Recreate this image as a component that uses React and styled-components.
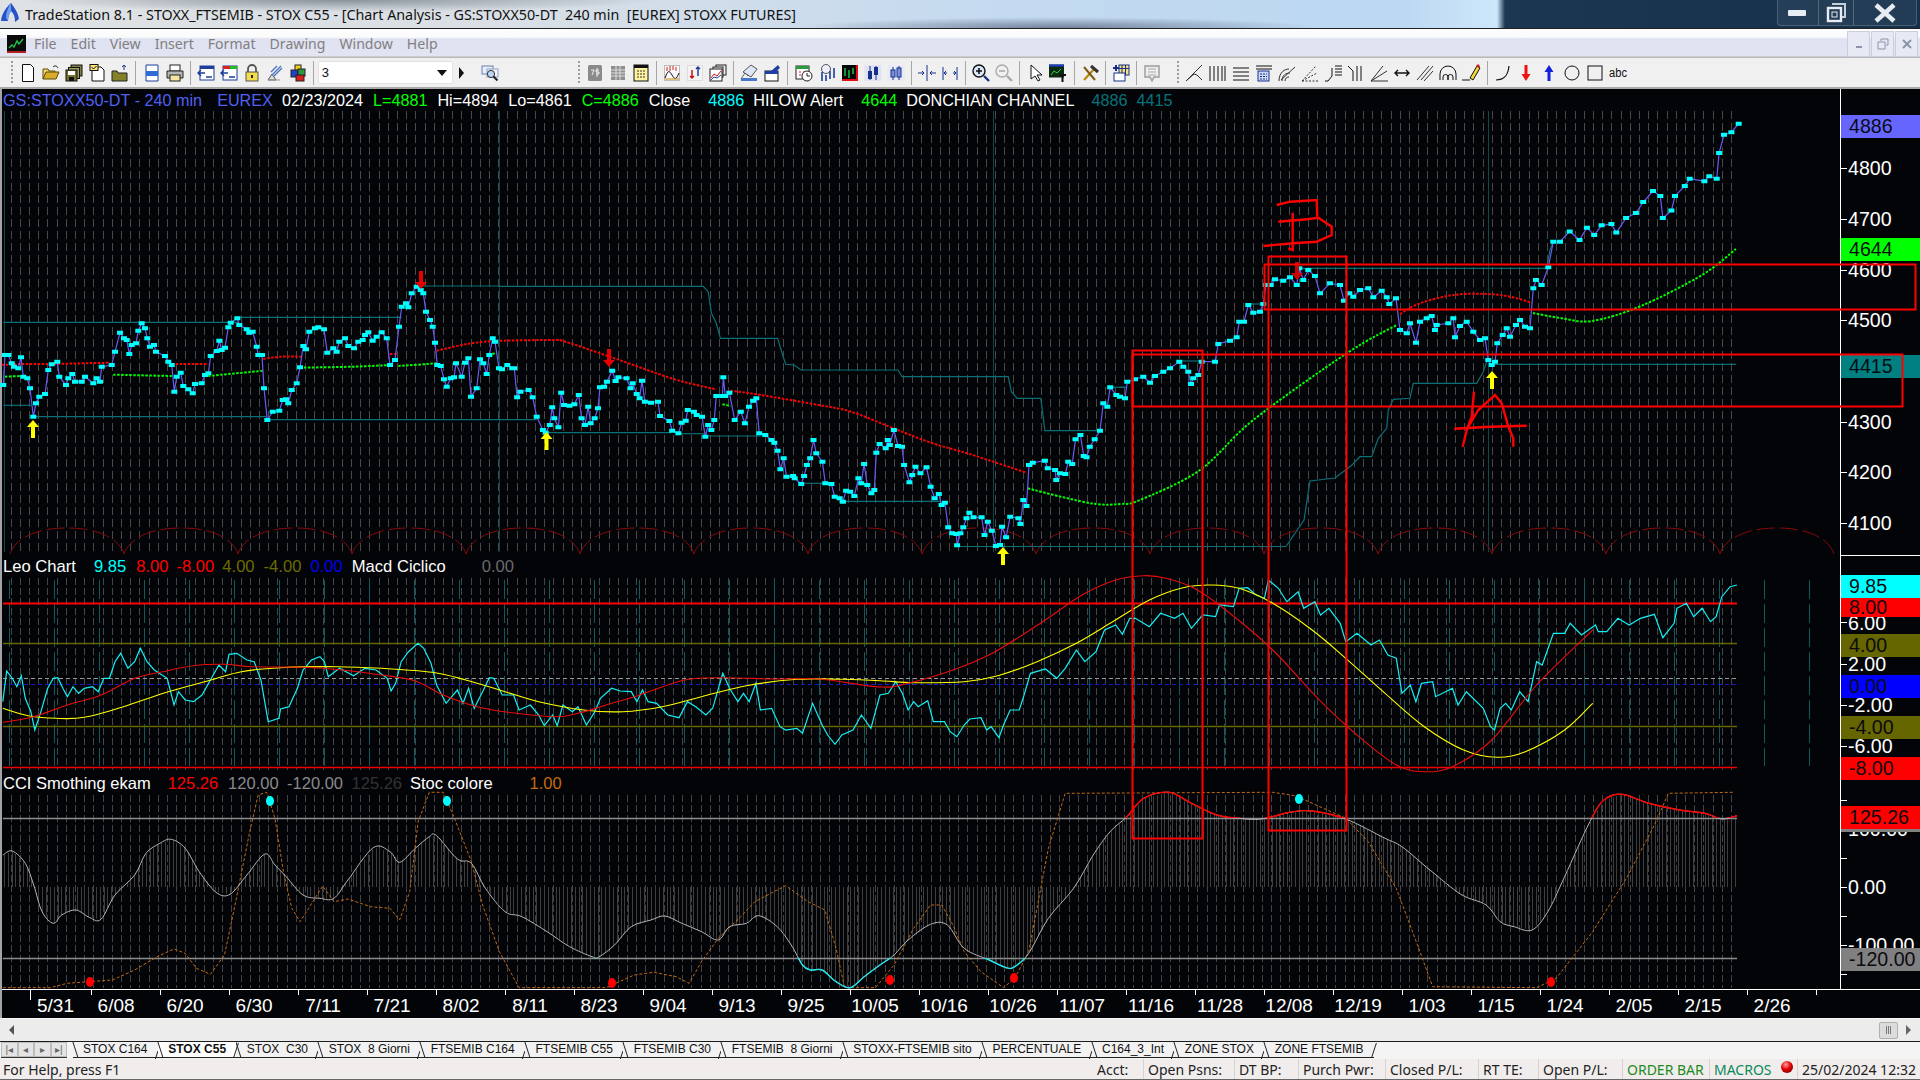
import React from 'react';
import styled, { createGlobalStyle } from 'styled-components';

const fromCrop = (pts, x0, y0, sx = 3, sy = 3) => pts.map(([x, y]) => [x0 + x / sx, y0 + y / sy]);
const toPoints = (pts) => pts.map(([x, y]) => `${x.toFixed(1)},${y.toFixed(1)}`).join(' ');
const Z10 = 2.45, Z11 = 1.782, SHOWN = 0.8167;

// catmull-rom through the points, for the averages
const smoothPath = (pts) => {
  let d = `M${pts[0][0].toFixed(1)} ${pts[0][1].toFixed(1)}`;
  for (let i = 0; i < pts.length - 1; i++) {
    const p0 = pts[i - 1] || pts[i];
    const p1 = pts[i];
    const p2 = pts[i + 1];
    const p3 = pts[i + 2] || p2;
    const c1x = p1[0] + (p2[0] - p0[0]) / 6;
    const c1y = p1[1] + (p2[1] - p0[1]) / 6;
    const c2x = p2[0] - (p3[0] - p1[0]) / 6;
    const c2y = p2[1] - (p3[1] - p1[1]) / 6;
    d += `C${c1x.toFixed(1)} ${c1y.toFixed(1)} ${c2x.toFixed(1)} ${c2y.toFixed(1)} ${p2[0].toFixed(1)} ${p2[1].toFixed(1)}`;
  }
  return d;
};

const priceLine = [
  ...fromCrop([[10,345],[15,255],[25,255],[35,280],[42,290],[55,295],[63,262],[70,320],[82,325],[90,355],[100,440],[108,400],[118,380],[135,372],[145,300],[155,283],[172,275],[178,320],[198,345],[205,325],[217,312],[225,335],[245,335],[255,320],[280,340],[290,325],[300,335],[305,290],[335,285],[345,245],[360,188],[372,205],[380,210],[388,252],[395,225],[408,220],[415,182],[425,160],[435,175],[442,205],[450,230],[462,225],[468,245],[495,258],[505,275],[515,285],[523,365],[530,320],[542,308],[550,348],[565,358],[578,370],[585,342],[605,340],[615,315],[625,310],[632,258],[650,243],[658,212],[665,240],[675,233],[685,172],[692,158],[712,145],[718,165],[740,178],[748,188],[758,185],[770,230],[775,255],[786,255],[792,355],[802,450],[818,425],[838,422],[848,390],[858,388],[865,400],[875,360],[890,340],[900,292],[910,228],[918,238],[928,185],[945,175],[955,172],[972,178],[982,248],[1000,235],[1010,245],[1018,215],[1035,205],[1045,228],[1062,235],[1075,215],[1088,210],[1095,195],[1105,187],[1118,212],[1130,200],[1145,187],[1160,205],[1170,285],[1185,270],[1197,170],[1205,110],[1218,100],[1225,112],[1235,70],[1250,50],[1262,60],[1270,70],[1278,125],[1290,150],[1298,170],[1305,218],[1312,285],[1322,288],[1332,328],[1340,350],[1352,325],[1362,322],[1368,280],[1385,320],[1395,278],[1405,265],[1413,380],[1430,355],[1440,268],[1450,280],[1460,312],[1468,255],[1478,205],[1485,215],[1497,295]], 0, 270),
  ...fromCrop([[5,298],[18,285],[30,295],[35,295],[42,382],[50,365],[70,360],[80,382],[90,440],[105,480],[112,488],[122,465],[128,412],[133,445],[143,472],[150,368],[157,405],[170,407],[182,403],[193,375],[200,445],[208,465],[216,410],[222,460],[232,445],[240,415],[245,352],[255,350],[262,335],[275,302],[283,333],[290,322],[310,325],[320,355],[325,340],[335,372],[342,385],[348,332],[355,395],[370,398],[387,395],[392,438],[415,453],[422,482],[437,490],[445,458],[455,452],[460,420],[475,425],[482,435],[495,440],[503,500],[510,465],[518,480],[525,450],[530,378],[545,378],[547,322],[552,378],[562,368],[575,450],[590,425],[600,460],[610,410],[620,392],[628,385],[635,490],[650,495],[665,510],[672,518],[680,542],[687,598],[695,565],[702,620],[718,618],[722,625],[738,642],[745,618],[752,585],[760,565],[768,510],[775,550],[790,575],[797,640],[812,642],[820,680],[832,685],[840,695],[848,662],[858,665],[868,678],[878,625],[885,640],[892,582],[900,645],[910,670],[917,660],[922,548],[930,522],[945,535],[950,510],[955,525],[965,480],[975,528],[985,530],[990,585],[1003,637],[1010,615],[1018,590],[1030,610],[1045,592],[1055,650],[1065,685],[1075,672],[1082,705],[1090,698],[1098,772],[1108,790],[1118,792],[1120,826],[1128,790],[1135,772],[1143,745],[1150,728],[1160,742],[1180,742],[1187,795],[1195,755],[1205,782],[1215,828],[1225,825],[1230,770],[1240,802],[1250,740],[1270,745],[1275,762],[1282,690],[1290,708],[1296,585],[1305,578],[1335,572],[1342,595],[1360,600],[1363,630],[1372,610],[1385,612],[1392,575],[1402,582],[1410,508],[1422,495],[1430,558],[1437,562],[1445,530],[1457,508],[1470,482],[1478,400],[1488,410],[1495,352],[1510,375]], 500, 270, Z10),
  ...fromCrop([[0,620],[15,625],[22,575],[45,568],[70,560],[90,578],[105,558],[130,545],[150,535],[178,515],[190,530],[205,545],[213,582],[220,565],[235,555],[245,515],[285,515],[295,462],[330,452],[350,442],[358,395],[372,395],[385,345],[400,368],[420,365],[430,342],[438,285],[452,285],[465,268],[490,272],[510,262],[530,285],[538,235],[550,270],[565,240],[585,258],[600,310],[630,280],[660,285],[672,332],[688,310],[700,320],[720,300],[745,295],[760,322],[785,302],[800,322],[808,342],[828,325],[840,420],[860,430],[870,400],[888,458],[900,395],[920,385],[935,378],[945,420],[950,405],[985,400],[1000,385],[1005,442],[1020,408],[1040,395],[1060,425],[1080,450],[1095,445],[1105,510],[1115,525],[1125,515],[1132,460],[1148,435],[1160,415],[1170,440],[1188,405],[1200,390],[1215,410],[1230,415],[1240,295],[1248,270],[1265,285],[1285,232],[1300,155],[1320,155]], 1120, 190),
  ...fromCrop([[1282,189],[1290,196],[1296,186],[1302,192],[1308,184],[1316,183],[1320,190],[1328,178],[1336,174],[1342,165],[1350,156],[1356,160],[1358,178],[1365,172],[1368,160],[1376,152],[1380,146],[1392,148],[1396,144],[1402,146],[1404,125],[1408,110],[1414,108],[1420,101]], 0, 0, SHOWN, SHOWN),
];

const channelLines = [
  fromCrop([[10,157],[715,157]], 0, 270),
  fromCrop([[715,142],[1205,142]], 0, 270),
  fromCrop([[1262,48],[1500,48]], 0, 270),
  fromCrop([[0,49],[498,49],[510,65],[518,130],[530,160],[540,205],[680,205],[695,265],[700,283],[720,285],[738,300],[975,300],[985,320],[1245,320],[1253,365],[1267,385],[1325,385],[1335,482],[1470,482]], 500, 270, Z10),
  fromCrop([[1495,352],[1535,352]], 500, 270, Z10),
  fromCrop([[0,592],[18,592]], 1120, 190),
  fromCrop([[180,513],[245,513]], 1120, 190),
  fromCrop([[385,342],[430,342]], 1120, 190),
  fromCrop([[540,235],[1280,235],[1290,180],[1300,155]], 1120, 190),
  fromCrop([[10,406],[92,406]], 0, 270),
  fromCrop([[100,440],[800,440]], 0, 270),
  fromCrop([[805,449],[1500,449]], 0, 270),
  fromCrop([[0,449],[90,449]], 500, 270, Z10),
  fromCrop([[112,488],[420,488]], 500, 270, Z10),
  fromCrop([[437,491],[500,491]], 500, 270, Z10),
  fromCrop([[503,498],[640,498]], 500, 270, Z10),
  fromCrop([[740,640],[797,640]], 500, 270, Z10),
  fromCrop([[840,694],[1080,694]], 500, 270, Z10),
  [[957,546.5],[1286,546.5]],
  [[1286,546.5],[1304,520],[1310,481],[1335,478],[1352,465],...fromCrop([[700,820],[720,800],[755,800],[775,745],[800,715],[805,660],[820,628],[870,625],[880,580],[1070,580],[1090,545],[1100,515]], 1120, 190)],
  [[1490,364.3],[1736,364.3]],
];

const redAverage = [
  fromCrop([[5,285],[70,282],[150,282],[330,278]], 0, 270),
  fromCrop([[515,282],[625,282]], 0, 270),
  fromCrop([[790,267],[840,260],[905,260]], 0, 270),
  fromCrop([[1170,252],[1190,252]], 0, 270),
  fromCrop([[1310,242],[1400,222],[1475,213]], 0, 270),
  fromCrop([[0,212],[130,210],[160,215],[280,265],[420,325],[500,350],[530,358]], 500, 270, Z10),
  fromCrop([[565,362],[640,375],[780,405],[860,425],[970,478],[1060,520],[1150,552],[1290,608]], 500, 270, Z10),
  fromCrop([[840,372],[900,340],[1000,315],[1100,312],[1170,320],[1235,338]], 1120, 190),
];

const greenAverage = [
  fromCrop([[15,320],[65,318]], 0, 270),
  fromCrop([[170,318],[180,319]], 0, 270),
  fromCrop([[340,314],[515,318]], 0, 270),
  fromCrop([[625,318],[790,302]], 0, 270),
  fromCrop([[900,293],[1060,290],[1170,285]], 0, 270),
  fromCrop([[1195,288],[1310,280]], 0, 270),
  fromCrop([[1465,252],[1490,250]], 0, 270),
  fromCrop([[545,403],[565,408]], 500, 270, Z10),
  [...fromCrop([[1293,655],[1380,682],[1460,702],[1520,702],[1568,690]], 500, 270, Z10), ...fromCrop([[240,840],[400,690],[680,490],[830,405]], 1120, 190)],
  [[1533,313],[1560,318],[1592,321],[1641,306],[1702,275],[1736,249]],
];

const macdLine = [
  ...fromCrop([[5,440],[12,348],[22,370],[30,395],[38,362],[45,430],[55,470],[62,525],[72,475],[85,400],[95,370],[103,368],[112,400],[120,425],[130,395],[140,415],[150,400],[165,395],[175,410],[185,370],[195,370],[205,320],[215,295],[228,340],[240,320],[250,280],[262,320],[275,345],[298,370],[310,450],[318,410],[330,435],[345,440],[360,420],[375,375],[390,330],[402,350],[408,298],[422,295],[440,315],[453,320],[465,375],[478,500],[497,490],[500,462],[515,455],[530,400],[540,345],[555,315],[570,305],[578,320],[585,365],[605,340],[630,362],[650,340],[670,345],[690,370],[697,408],[705,385],[715,320],[728,290],[745,265],[755,280],[768,325],[778,390],[795,445],[815,405],[825,445],[835,400],[845,460],[860,410],[872,368],[880,370],[895,420],[915,420],[925,465],[945,450],[960,480],[970,512],[985,480],[993,512],[1003,450],[1020,470],[1030,455],[1045,510],[1060,470],[1070,430],[1090,400],[1105,408],[1125,410],[1135,440],[1145,405],[1155,440],[1170,445],[1190,480],[1210,488],[1225,440],[1240,455],[1258,480],[1270,460],[1288,355],[1300,400],[1315,440],[1325,415],[1335,440],[1347,385],[1355,465],[1375,460],[1390,515],[1400,525],[1420,520],[1430,535],[1448,445],[1465,510],[1475,540],[1488,568],[1500,540],[1520,525],[1535,480],[1552,520],[1568,420]], 0, 555, Z11),
  ...fromCrop([[15,415],[28,380],[40,415],[50,465],[60,440],[68,455],[85,437],[95,500],[115,500],[125,530],[137,545],[150,510],[160,492],[180,488],[190,525],[198,515],[212,548],[220,510],[232,465],[248,465],[255,430],[268,355],[295,342],[315,370],[330,340],[350,285],[365,320],[385,290],[400,225],[420,210],[432,238],[445,190],[455,190],[480,215],[500,175],[525,190],[540,175],[555,220],[575,180],[598,185],[605,150],[630,155],[640,100],[655,98],[670,120],[685,130],[692,75],[710,100],[725,140],[745,110],[755,160],[775,140],[785,180],[800,160],[820,205],[830,260],[850,235],[875,270],[890,255],[905,300],[920,310],[930,415],[945,390],[955,440],[965,385],[985,380],[990,425],[1020,400],[1030,450],[1045,410],[1075,460],[1088,515],[1095,525],[1105,460],[1115,445],[1125,465],[1140,410],[1155,440],[1170,320],[1180,330],[1200,235],[1220,235],[1230,205],[1250,240],[1275,210],[1280,230],[1295,230],[1315,190],[1335,210],[1355,190],[1380,178],[1395,248],[1415,205],[1420,160],[1437,145],[1450,185],[1465,160],[1480,200],[1490,185],[1500,125],[1515,95],[1527,90]], 880, 555, Z11),
];

const macdRed = [
  ...fromCrop([[5,502],[60,485],[120,450],[180,420],[240,370],[290,350],[345,332],[400,328],[450,335],[540,337],[610,345],[680,360],[740,378],[790,420],[850,455],[920,475],[990,485],[1030,475],[1080,450],[1140,420],[1220,375],[1290,368],[1380,372],[1460,372],[1568,396]], 0, 555, Z11),
  ...fromCrop([[50,385],[130,345],[200,295],[290,200],[360,120],[420,75],[470,62],[510,70],[560,100],[620,170],[700,285],[780,430],[850,540],[920,630],[970,650],[1020,635],[1090,555],[1170,390],[1270,225]], 880, 555, Z11),
];

const macdYellow = [
  ...fromCrop([[5,460],[50,482],[100,490],[150,487],[220,455],[300,410],[370,378],[430,350],[500,338],[600,335],[680,340],[770,352],[830,375],[900,410],[960,440],[1040,465],[1110,470],[1180,455],[1250,425],[1330,392],[1420,373],[1500,373],[1568,377]], 0, 555, Z11),
  ...fromCrop([[60,383],[150,380],[210,362],[280,320],[350,265],[410,205],[480,135],[540,98],[590,90],[640,100],[700,145],[770,225],[830,310],[900,415],[970,515],[1040,585],[1100,607],[1150,590],[1220,525],[1270,445]], 880, 555, Z11),
];

const cciLine = [
  ...fromCrop([[5,900],[22,888],[45,925],[60,990],[75,1070],[95,1105],[110,1080],[135,1065],[160,1088],[180,1093],[205,1020],[240,960],[260,895],[285,865],[305,853],[330,880],[355,950],[385,1012],[410,1018],[440,960],[472,897],[490,930],[510,965],[540,1020],[570,1030],[595,1030],[620,975],[665,878],[695,890],[712,922],[740,880],[765,845],[778,842],[815,912],[840,925],[865,1000],[900,1070],[930,1085],[975,1130],[1015,1175],[1055,1205],[1068,1205],[1095,1170],[1125,1115],[1160,1095],[1185,1083],[1215,1105],[1250,1130],[1280,1155],[1300,1115],[1330,1105],[1352,1082],[1385,1115],[1410,1170],[1430,1230],[1445,1245],[1465,1245],[1490,1280],[1515,1298],[1540,1265],[1568,1230]], 0, 555, Z11),
  ...fromCrop([[25,1200],[50,1155],[90,1108],[120,1110],[150,1180],[195,1215],[225,1238],[240,1235],[265,1195],[300,1090],[345,1000],[380,900],[410,830],[440,785],[470,730],[515,712],[555,745],[600,780],[640,790],[680,792],[730,772],[770,768],[830,792],[900,850],[930,875],[980,945],[1035,1018],[1080,1050],[1105,1100],[1130,1115],[1162,1125],[1190,1070],[1220,965],[1265,800],[1290,735],[1322,718],[1370,745],[1425,765],[1470,775],[1500,792],[1527,782]], 880, 555, Z11),
];

const stocLine = [
  ...fromCrop([[5,1298],[90,1298],[120,1285],[200,1275],[240,1245],[280,1205],[310,1182],[330,1195],[350,1240],[375,1258],[400,1200],[420,1040],[445,830],[460,720],[475,712],[490,790],[505,950],[520,1060],[535,1100],[550,1060],[575,993],[595,1040],[620,1032],[660,1055],[695,1060],[712,1095],[730,1010],[745,800],[765,712],[790,712],[810,790],[840,920],[860,1050],[890,1190],[925,1298],[1080,1298],[1130,1260],[1165,1252],[1205,1265],[1228,1285],[1250,1220],[1280,1150],[1320,1085],[1345,1040],[1400,992],[1440,1040],[1470,1065],[1490,1180],[1505,1298],[1560,1298]], 0, 555, Z11),
  ...fromCrop([[25,1230],[60,1120],[90,1050],[110,1050],[130,1110],[150,1190],[180,1250],[220,1298],[240,1270],[265,1190],[300,880],[330,715],[700,712],[740,722],[830,790],[870,860],[920,1000],[960,1180],[985,1295],[1170,1298],[1205,1270],[1270,1130],[1330,970],[1380,810],[1405,715],[1520,712]], 880, 555, Z11),
];

const cciAt = (x) => {
  for (let i = 1; i < cciLine.length; i++) {
    const [x1, y1] = cciLine[i];
    if (x1 >= x) {
      const [x0, y0] = cciLine[i - 1];
      return y0 + ((y1 - y0) * (x - x0)) / (x1 - x0 || 1);
    }
  }
  return 887;
};

const range = (from, to, step) => {
  const out = [];
  for (let v = from; step > 0 ? v <= to : v >= to; v += step) out.push(v);
  return out;
};

const grayGrid = (top, bottom) => range(1731, 3, -9.2).map((x) => `M${Math.round(x) + 0.5} ${top}V${bottom}`).join('');
const bars = range(4, 1737, 3.83).map((x) => `M${Math.round(x) + 0.5} 887V${cciAt(x).toFixed(1)}`).join('');

const arcs = range(-1, 14, 1).map((k) => {
  const c = 124 + 114 * k;
  return `M${c} 554C${c + 4} 541 ${c + 22} 528 ${c + 57} 528S${c + 110} 541 ${c + 114} 554`;
}).join('');

const dates = ['6/08','6/20','6/30','7/11','7/21','8/02','8/11','8/23','9/04','9/13','9/25','10/05','10/16','10/26','11/07','11/16','11/28','12/08','12/19','1/03','1/15','1/24','2/05','2/15','2/26',''];

const GlobalStyle = createGlobalStyle`
  html, body { margin: 0; padding: 0; background: #000; }
  * { box-sizing: border-box; }
`;

const Window = styled.div`
  width: 1920px;
  height: 1080px;
  display: flex;
  flex-direction: column;
  overflow: hidden;
  font-family: "Noto Sans", "Liberation Sans", sans-serif;
`;

const TitleBar = styled.div`
  height: 29px;
  display: flex;
  align-items: flex-start;
  border-bottom: 1px solid #222;
  background:
    radial-gradient(ellipse 320px 12px at 340px 0, rgba(110,120,130,.75), transparent),
    radial-gradient(ellipse 260px 11px at 1060px 28px, rgba(60,70,100,.6), transparent),
    linear-gradient(90deg, #dfe2e4 0, #d9dfe5 500px, #c4daf0 1000px, #bcd8f2 1400px, #cde6fa 1497px, #1b3752 1505px, #16304b 1920px);
`;

const TitleText = styled.div`
  margin-left: 5px;
  font-size: 14.3px;
  line-height: 29px;
  color: #111;
  white-space: pre;
`;

const WindowButtons = styled.div`
  margin-left: auto;
  margin-right: 3px;
  height: 26px;
  display: flex;
  border: 1px solid rgba(255,255,255,.22);
  border-top: 0;
  border-radius: 0 0 4px 4px;
`;

const WindowButton = styled.div`
  width: ${(p) => p.$w}px;
  display: flex;
  align-items: center;
  justify-content: center;
  border-left: ${(p) => (p.$first ? '0' : '1px solid rgba(255,255,255,.22)')};
  background: rgba(255,255,255,.06);
`;

const MenuBar = styled.div`
  height: 29px;
  display: flex;
  align-items: center;
  padding-left: 7px;
  background: linear-gradient(#fdfdfd 0, #fbfbfb 28%, #dfe2f1 34%, #e2e4f2 92%, #b9b9b9 97%);
`;

const MenuItems = styled.div`
  display: flex;
  gap: 14px;
  margin-left: 8px;
`;

const MenuItem = styled.span`
  font-size: 14.1px;
  color: #808080;
`;

const MdiButtons = styled.div`
  margin-left: auto;
  margin-right: 2px;
  display: flex;
  gap: 1px;
`;

const MdiButton = styled.div`
  width: 23px;
  height: 26px;
  display: flex;
  align-items: center;
  justify-content: center;
  border: 1px solid #c9cfdd;
  background: #e7eaf5;
`;

const Toolbar = styled.div`
  height: 31px;
  display: flex;
  align-items: center;
  padding-left: 10px;
  background: #f0f0f0;
  border-bottom: 2px solid #a9a9a9;
`;

const Grip = styled.div`
  width: 6.5px;
  height: 24px;
  margin-left: ${(p) => p.$left || 0}px;
  background: repeating-linear-gradient(#9c9c9c 0 2px, transparent 2px 4px) left 1px top 0 / 2px 100% no-repeat;
`;

const ToolSlot = styled.div`
  width: 23.1px;
  height: 22px;
  flex: none;
  display: flex;
  align-items: center;
  justify-content: center;
  margin-left: ${(p) => p.$left || 0}px;
`;

const ToolSep = styled.div`
  width: 1px;
  height: 24px;
  margin: 0 3.5px;
  flex: none;
  background: #a6a6a6;
`;

const Combo = styled.div`
  width: 135px;
  height: 23px;
  flex: none;
  display: flex;
  align-items: center;
  justify-content: space-between;
  padding: 0 5px 0 3px;
  background: #fff;
  border: 1px solid #e2e2e2;
  border-radius: 2px;
  font: 13px "Liberation Sans", sans-serif;
  color: #111;
`;

const ComboDrop = styled.span`
  border-top: 6px solid #111;
  border-left: 5px solid transparent;
  border-right: 5px solid transparent;
`;

const ComboNext = styled.span`
  margin: 0 5px 0 6px;
  width: 5px;
  flex: none;
  border-left: 5px solid #111;
  border-top: 6px solid transparent;
  border-bottom: 6px solid transparent;
`;

const ChartFrame = styled.div`
  height: 929px;
  position: relative;
  display: flex;
  flex-direction: column;
  background: #030408;
  border-left: 2px solid #a4a4a4;
  font-family: "Liberation Sans", Arial, sans-serif;
`;

const PaneRow = styled.div`
  height: ${(p) => p.$h}px;
  display: grid;
  grid-template-columns: 1838px 80px;
`;

const PlotColumn = styled.div`
  display: flex;
  flex-direction: column;
  min-width: 0;
`;

const Legend = styled.div`
  height: ${(p) => p.$h}px;
  padding-top: ${(p) => p.$pad || 0}px;
  padding-left: 1px;
  display: flex;
  align-items: center;
  font-size: ${(p) => p.$size || 16.2}px;
  white-space: pre;
  color: #fff;
`;

const LegendItem = styled.span`
  color: ${(p) => p.$c || '#fff'};
  margin-left: ${(p) => p.$gap ?? 10}px;
`;

const Plot = styled.svg`
  display: block;
  width: 1838px;
  height: ${(p) => p.$h}px;
  overflow: visible;
`;

const AxisColumn = styled.div`
  position: relative;
  border-left: 1px solid #fff;
  border-bottom: ${(p) => (p.$sep ? '1px solid #fff' : '0')};
  font-size: 19.6px;
  color: #fff;
`;

const AxisLabel = styled.div`
  position: absolute;
  left: 7px;
  height: 23px;
  line-height: 23px;
  white-space: pre;
`;

const AxisTag = styled.div`
  position: absolute;
  left: 0;
  right: 0;
  height: ${(p) => p.$h || 23}px;
  padding-left: 8px;
  line-height: ${(p) => p.$h || 23}px;
  background: ${(p) => p.$bg};
  color: #0b0b12;
`;

const AxisTick = styled.div`
  position: absolute;
  left: 0;
  width: 6px;
  height: 1px;
  background: #fff;
`;

const TimeAxis = styled.div`
  height: 29px;
  display: flex;
  padding-left: 28px;
  border-top: 1px solid #fff;
  font-size: 19px;
  color: #fff;
`;

const TimeCell = styled.div`
  width: ${(p) => p.$w}px;
  flex: none;
  position: relative;
  height: 100%;
  &::before {
    content: '';
    position: absolute;
    left: 0;
    top: 0;
    width: 1px;
    height: ${(p) => (p.$long ? 10 : 5)}px;
    background: #fff;
  }
`;

const TimeText = styled.span`
  display: block;
  width: 51px;
  line-height: 32px;
  text-align: center;
`;

const Drawings = styled.svg`
  position: absolute;
  left: 0;
  top: 0;
  width: 1918px;
  height: 929px;
  pointer-events: none;
`;

const ScrollRow = styled.div`
  height: 23px;
  display: flex;
  align-items: center;
  padding: 0 9px;
  background: #ececec;
  border-top: 1px solid #f6f6f6;
`;

const ArrowLeft = styled.span`
  border-right: 5px solid #555;
  border-top: 5px solid transparent;
  border-bottom: 5px solid transparent;
`;

const ArrowRight = styled.span`
  margin-left: 8px;
  border-left: 5px solid #666;
  border-top: 5px solid transparent;
  border-bottom: 5px solid transparent;
`;

const ScrollThumb = styled.div`
  margin-left: auto;
  width: 19px;
  height: 17px;
  display: flex;
  align-items: center;
  justify-content: center;
  gap: 1px;
  background: #dcdcdc;
  border: 1px solid #b0b0b0;
  border-radius: 2px;
`;

const ThumbLine = styled.span`
  width: 1px;
  height: 8px;
  background: #777;
`;

const TabRow = styled.div`
  height: 18px;
  display: flex;
  padding-left: 1px;
  background: #f4f4f4;
  border-top: 1px solid #1c1c1c;
`;

const TabNav = styled.div`
  width: 66px;
  height: 16px;
  flex: none;
  display: flex;
  margin-right: 5.6px;
  background: #e4e4e4;
  border-bottom: 1px solid #333;
`;

const TabNavButton = styled.span`
  flex: 1;
  display: flex;
  align-items: center;
  justify-content: center;
  border: 1px solid #bcbcbc;
  color: #666;
  font: 10px "Liberation Sans", sans-serif;
`;

const Tab = styled.div`
  position: relative;
  height: 16px;
  padding: 0 10.4px;
  white-space: pre;
  font: ${(p) => (p.$active ? 'bold' : 'normal')} 12px/15px "Liberation Sans", sans-serif;
  color: #111;
  background: ${(p) => (p.$active ? '#fff' : '#f2f2f2')};
  border-bottom: 1px solid #222;
  z-index: ${(p) => (p.$active ? 1 : 0)};
  &::before, &::after {
    content: '';
    position: absolute;
    width: 1px;
    background: #222;
    bottom: -1px;
  }
  &::before { left: 2px; top: 0; transform: skewX(18deg); }
  &::after {
    right: 2px;
    height: ${(p) => (p.$active || p.$last ? '100%' : '50%')};
    transform: skewX(-18deg);
    transform-origin: bottom;
  }
`;

const StatusBar = styled.div`
  height: 21px;
  display: flex;
  align-items: center;
  background: #f1eded;
  font-size: 14px;
  color: #222;
  white-space: pre;
  border-bottom: 1px solid #666;
`;

const StatusHelp = styled.div`
  flex: 1;
  padding-left: 3px;
`;

const StatusCell = styled.div`
  width: ${(p) => p.$w}px;
  flex: none;
  height: 100%;
  display: flex;
  align-items: center;
  padding-left: 4px;
  border-left: ${(p) => (p.$plain ? '0' : '1px solid #d6d2d2')};
  color: ${(p) => p.$c || '#222'};
`;

const StatusLed = styled.span`
  width: 12px;
  height: 12px;
  margin: -5px 0 0 -1px;
  border-radius: 50%;
  background: radial-gradient(circle at 40% 30%, #ff9a9a, #e00000 45%, #5c0000);
`;

const Svg20 = ({ children }) => <svg width="20" height="20" viewBox="0 0 20 20">{children}</svg>;

const ICONS = {
  newDoc: <path d="M4.5 1.5h8l3 3v14h-11z" fill="#fff" stroke="#111" />,
  open: <><path d="M2 16V6h5l1 2h6v2" fill="#f3d774" stroke="#5a4a00" /><path d="M2 16l3-7h13l-3 7z" fill="#d9ac2c" stroke="#5a4a00" /><path d="M12 4c2-2 4-1 5 1" fill="none" stroke="#111" /></>,
  saveAll: <><rect x="7" y="2" width="11" height="11" fill="#808040" stroke="#111" /><rect x="4.5" y="4.5" width="11" height="11" fill="#a0a060" stroke="#111" /><rect x="2" y="7" width="11" height="11" fill="#707030" stroke="#111" /><rect x="4" y="8" width="7" height="4" fill="#fff" /><rect x="5" y="14" width="5" height="4" fill="#111" /></>,
  docCheck: <><path d="M5 4h9l3 3v11H5z" fill="#fff" stroke="#111" /><rect x="3" y="1.5" width="8" height="6" fill="#ffe27a" stroke="#111" /><path d="M4.5 4l2 2 3-3" fill="none" stroke="#111" /></>,
  folderUp: <><path d="M2 8h5l1 2h9v8H2z" fill="#84802a" stroke="#222" /><path d="M14 7V2m-2 2l2-2 2 2" fill="none" stroke="#1a3a8a" /></>,
  page: <><path d="M4 2h12v16H4z" fill="#fff" stroke="#1c3f9c" /><rect x="4" y="8" width="12" height="5" fill="#2f6bd6" /></>,
  printer: <><rect x="5" y="2" width="10" height="6" fill="#fff" stroke="#222" /><path d="M2 8h16v7H2z" fill="#b5b5b5" stroke="#222" /><rect x="5" y="12" width="10" height="6" fill="#f4e6a2" stroke="#222" /></>,
  winBack: <><rect x="4" y="3" width="14" height="14" fill="#fff" stroke="#1c3f9c" /><rect x="4" y="3" width="14" height="3" fill="#1c3f9c" /><path d="M9 10H2m3-3l-3 3 3 3M10 14h6" fill="none" stroke="#1c3f9c" strokeWidth="1.4" /></>,
  winBack2: <><rect x="4" y="3" width="14" height="14" fill="#fff" stroke="#1c3f9c" /><rect x="4" y="3" width="7" height="3" fill="#d22" /><rect x="11" y="3" width="7" height="3" fill="#2b2" /><path d="M9 10H2m3-3l-3 3 3 3M10 14h6" fill="none" stroke="#1c3f9c" strokeWidth="1.4" /></>,
  lock: <><path d="M6 9V6a4 4 0 018 0v3" fill="none" stroke="#555" strokeWidth="1.8" /><rect x="4" y="9" width="12" height="9" fill="#f3dc4a" stroke="#555" /><rect x="9" y="12" width="2" height="3" fill="#222" /></>,
  dish: <><path d="M3 17l4-6 4 6z" fill="#ddd" stroke="#555" /><path d="M7 12l9-9M9 13l8-8M6 9l6-6" stroke="#4d78c4" strokeWidth="1.4" /><path d="M3 17h12" stroke="#999" /></>,
  cubes: <><rect x="7" y="2" width="6" height="6" fill="#f2d21c" stroke="#222" /><rect x="3" y="7" width="7" height="7" fill="#2240c8" stroke="#222" /><rect x="10" y="6" width="7" height="7" fill="#2a9a3c" stroke="#222" /><rect x="8" y="12" width="8" height="6" fill="#d61f1f" stroke="#222" /></>,
  lens: <><rect x="2" y="3" width="11" height="8" fill="#e7eefb" stroke="#6d7fb0" /><rect x="7" y="6" width="11" height="8" fill="#f5f5f5" stroke="#8ba0c8" /><circle cx="11" cy="11" r="3.6" fill="#bcd6f5" stroke="#333" /><path d="M13.5 13.5l4 4" stroke="#222" strokeWidth="2" /></>,
  calc: <><rect x="3" y="2" width="14" height="16" rx="1.5" fill="#8a8a8a" /><path d="M6 7h3l-2 5M12 5v9M14 7h-3v2h3v2h-3" fill="none" stroke="#eee" /></>,
  table: <><rect x="3" y="3" width="14" height="14" fill="#8f8f8f" /><path d="M3 7h14M3 10h14M3 13h14M8 3v14M12 3v14" stroke="#ddd" /></>,
  yellowTable: <><rect x="3" y="2" width="14" height="16" fill="#fff3a0" stroke="#111" /><rect x="3" y="2" width="14" height="3" fill="#111" /><path d="M6 8h8M6 11h8M6 14h8" stroke="#333" strokeDasharray="2 1" /></>,
  wave: <><rect x="2.5" y="2.5" width="15" height="15" fill="#fafafa" stroke="#bbb" /><path d="M3 15c3-8 4-8 7-3s4 5 7-2" fill="none" stroke="#111" /><path d="M5 8V4M8 8V3M11 7V3M14 8V4" stroke="#cc2222" /><path d="M3 16h14" stroke="#c08a00" /></>,
  updown: <><rect x="2.5" y="2.5" width="15" height="15" fill="#f4f4f4" stroke="#ddd" /><path d="M7 7v8m-2-2l2 2 2-2" fill="none" stroke="#c11" strokeWidth="1.5" /><path d="M13 13V4m-2 2l2-2 2 2" fill="none" stroke="#1c3f9c" strokeWidth="1.5" /></>,
  stack: <><rect x="8" y="2" width="10" height="10" fill="#eee" stroke="#222" /><rect x="5" y="4" width="10" height="10" fill="#eee" stroke="#222" /><rect x="2" y="6" width="12" height="12" fill="#fff" stroke="#222" /><path d="M3 15l3-4 3 2 4-5" fill="none" stroke="#c11" /><path d="M3 17l3-3 3 1 4-3" fill="none" stroke="#1c3f9c" /></>,
  handChart: <><path d="M2 16l4-6 3 3 5-8" fill="none" stroke="#666" /><path d="M4 9l8-7 6 4-6 8z" fill="#dfe6f4" stroke="#555" /><rect x="2" y="15" width="16" height="3" fill="#4a78c8" /></>,
  folderBlue: <><rect x="3" y="8" width="13" height="10" fill="#fff" stroke="#111" /><rect x="3" y="8" width="13" height="3" fill="#1f3fa8" /><path d="M8 9l8-7 2 3-7 6" fill="#1f3fa8" /></>,
  calClock: <><rect x="2" y="3" width="13" height="13" fill="#fff" stroke="#222" /><rect x="2" y="3" width="13" height="3" fill="#2a9a3c" /><path d="M5 9h2M9 9h2M5 12h2" stroke="#c22" /><circle cx="13" cy="13" r="5" fill="#fff" stroke="#222" /><path d="M13 10v3h3" fill="none" stroke="#222" /></>,
  gearBars: <><circle cx="9" cy="6" r="4.5" fill="#eef" stroke="#555" /><path d="M5 18V9M9 18V12M13 16V8M17 15V5" stroke="#1c3f9c" strokeWidth="1.6" /></>,
  blackChart: <><rect x="2" y="2" width="16" height="16" fill="#050505" /><path d="M5 5v8M9 7v8M13 5v6" stroke="#20d040" strokeWidth="1.4" /><rect x="2" y="16" width="16" height="2" fill="#e01010" /><rect x="16" y="2" width="2" height="16" fill="#e01010" /></>,
  candles: <><rect x="1.5" y="2" width="17" height="16" fill="#dfe3f3" /><path d="M7 3v14M13 3v14" stroke="#14308c" /><rect x="5" y="8" width="4" height="8" fill="#14308c" /><rect x="11" y="4" width="4" height="8" fill="#14308c" /></>,
  candles2: <><rect x="1.5" y="2" width="17" height="16" fill="#e8eaf6" /><path d="M7 4v13M13 3v14" stroke="#14308c" /><rect x="5" y="7" width="4" height="7" fill="#7d8fd6" stroke="#14308c" /><rect x="11" y="5" width="4" height="9" fill="#7d8fd6" stroke="#14308c" /></>,
  barIn: <path d="M10 2v16M1 10h6m-2-2l2 2-2 2M19 10h-6m2-2l-2 2 2 2" fill="none" stroke="#14308c" />,
  barOut: <path d="M3 4v13M17 4v13M7 10H4m2-2l-2 2 2 2M13 10h3m-2-2l2 2-2 2" fill="none" stroke="#14308c" />,
  zoomIn: <><circle cx="8" cy="8" r="6" fill="#d9e8fb" stroke="#111" strokeWidth="1.4" /><path d="M5 8h6M8 5v6" stroke="#111" strokeWidth="1.6" /><path d="M13 13l5 5" stroke="#14308c" strokeWidth="2.4" /></>,
  zoomOut: <><circle cx="8" cy="8" r="6" fill="#f0f0f0" stroke="#aaa" strokeWidth="1.4" /><path d="M5 8h6" stroke="#aaa" strokeWidth="1.6" /><path d="M13 13l5 5" stroke="#aaa" strokeWidth="2.4" /></>,
  cursor: <path d="M6 2v14l4-3 3 5 2-1-3-5h5z" fill="#fff" stroke="#111" />,
  chartT: <><rect x="1" y="1.5" width="15" height="13" fill="#0c2a10" /><rect x="1" y="1.5" width="15" height="2" fill="#1c3fd0" /><path d="M3 12l3-4 3 2 4-4" fill="none" stroke="#30d050" /><path d="M11 12h7M14.5 12v7" stroke="#111" strokeWidth="2" /></>,
  hammer: <><path d="M4 17L15 5" stroke="#b8860b" strokeWidth="2.2" /><path d="M11 3l7 6" stroke="#333" strokeWidth="3" /><path d="M4 4l11 13" stroke="#7a5c10" strokeWidth="2" /></>,
  plusWin: <><rect x="8" y="2" width="10" height="10" fill="#f8e27a" stroke="#14308c" /><path d="M8 5.5h10M11 2v10M14.5 2v10" stroke="#14308c" /><path d="M5 2v6M2 5h6" stroke="#14308c" strokeWidth="2" /><rect x="3" y="10" width="11" height="8" fill="#fff" stroke="#14308c" /></>,
  speech: <><path d="M3 3h14v11h-5l-2 4-2-4H3z" fill="#ededed" stroke="#9a9a9a" strokeWidth="1.4" /><path d="M6 6h8M6 9h8M6 12h8" stroke="#aaa" /></>,
  pencilFan: <path d="M2 18L18 2M2 18l8-7M13 12l5 5M10 11l3 1" fill="none" stroke="#333" />,
  vLines: <path d="M3 3v15M7 3v15M11 3v15M15 3v15M18 3v15" stroke="#111" />,
  hLines: <path d="M2 5h16M2 9h16M2 13h16M2 17h16" stroke="#111" strokeWidth="1.2" />,
  calcLines: <><path d="M2 3h16M2 6h16" stroke="#111" /><rect x="4" y="8" width="11" height="10" fill="#cfd9f3" stroke="#14308c" /><path d="M6 11h7M6 13.500h7M6 16h7" stroke="#14308c" strokeDasharray="2 1" /></>,
  arcFan: <path d="M2 18c0-9 6-12 10-12M5 18c0-6 4-8 8-8M8 18c0-3 2-4 4-4M4 17L18 4" fill="none" stroke="#333" />,
  dashFan: <path d="M2 18h16M2 18L16 3M2 18l15-8" fill="none" stroke="#333" strokeDasharray="2 1.5" />,
  retr: <path d="M2 18h3l4-5v-8M12 3h7M12 6h7M12 9h7M12 12h7" fill="none" stroke="#111" />,
  yLines: <path d="M2 3l5 5v10M11 3v15M15 3v15" fill="none" stroke="#111" />,
  fan: <path d="M2 18h17M2 18L18 8M2 18L14 3" fill="none" stroke="#333" />,
  arrowH: <path d="M3 10h14M6 7l-3 3 3 3M14 7l3 3-3 3" fill="none" stroke="#111" strokeWidth="1.4" />,
  parallel: <path d="M2 17L14 3M6 17L18 3M9 18L18 8" stroke="#333" />,
  arcs: <path d="M2 17v-6a8 8 0 0116 0v6M5 17v-3a2.500 2.500 0 015 0v3M10 17v-3a2.500 2.500 0 015 0v3" fill="none" stroke="#111" />,
  pencil: <><path d="M1 17h8" stroke="#111" /><path d="M9 15L16 3l3 2-7 12z" fill="#f5d33a" stroke="#111" /><path d="M15 3l2-2 2 2-1 2z" fill="#c22" /></>,
  curve: <path d="M3 17c8 0 12-4 13-14" fill="none" stroke="#111" strokeWidth="1.2" />,
  redDown: <path d="M8.500 2h3v9h3L10 18l-4.500-7h3z" fill="#ee1111" />,
  blueUp: <path d="M10 2l4.500 7h-3v9h-3V9h-3z" fill="#1122dd" />,
  circle: <circle cx="10" cy="10" r="7" fill="none" stroke="#111" />,
  square: <rect x="3" y="3" width="14" height="14" fill="none" stroke="#111" />,
  abc: <text x="1" y="14" fontSize="12" fontFamily="Liberation Sans, sans-serif" textLength="18" lengthAdjust="spacingAndGlyphs" fill="#111">abc</text>,
};

const TOOLS_A = ['newDoc','open','saveAll','docCheck','folderUp','|','page','printer','|','winBack','winBack2','lock','dish','cubes','|'];
const TOOLS_B = ['calc','table','yellowTable','|','wave','updown','stack','|','handChart','folderBlue','|','calClock','gearBars','blackChart','candles','candles2','|','barIn','barOut','|','zoomIn','zoomOut','|','cursor','chartT','|','hammer','|','plusWin','|','speech'];
const TOOLS_C = ['pencilFan','vLines','hLines','calcLines','arcFan','dashFan','retr','yLines','fan','arrowH','parallel','arcs','pencil','|','curve','redDown','blueUp','circle','square','abc'];

const ToolGroup = ({ items }) => items.map((name, i) =>
  name === '|'
    ? <ToolSep key={i} />
    : <ToolSlot key={i}><Svg20>{ICONS[name]}</Svg20></ToolSlot>
);

const AppLogo = () => (
  <svg width="20" height="24" viewBox="0 0 20 24" style={{ flex: 'none', marginTop: 2 }}>
    <path d="M1 19C2 10 7 5 11 1c3 4 7 9 8 16l-4 3c0-5-1-8-4-11-2 3-3 6-3 10z" fill="#2a52c8" />
    <path d="M11 1c-3 5-5 9-5 15l2 3c0-4 1-7 3-10z" fill="#6ea0f0" />
  </svg>
);

const MenuChartIcon = () => (
  <svg width="19" height="18" viewBox="0 0 19 18">
    <rect width="19" height="18" fill="#0a0a0a" />
    <path d="M2 13l3-3 2 2 3-6 2 3 4-5" fill="none" stroke="#24c048" strokeWidth="1.4" />
    <rect y="16" width="19" height="2" fill="#b02020" />
  </svg>
);

const Arrow = ({ x, y, up, color }) => (
  <path
    transform={`translate(${x} ${y})`}
    d={up ? 'M0 0l6 7h-4v11h-4V7h-4z' : 'M0 18l-6-7h4V0h4v11h4z'}
    fill={color}
  />
);

const Markers = ({ points }) => (
  <path
    d={points.map(([x, y]) => `M${(x - 3).toFixed(1)} ${y.toFixed(1)}h6`).join('')}
    stroke="#0ff"
    strokeWidth="4"
  />
);

const SeriesSet = ({ lines, ...rest }) => lines.map((pts, i) => <polyline key={i} points={toPoints(pts)} fill="none" {...rest} />);
const SmoothSet = ({ lines, ...rest }) => lines.map((pts, i) => <path key={i} d={smoothPath(pts)} fill="none" {...rest} />);

const Dot = ({ x, y, c }) => <ellipse cx={x} cy={y} rx="4" ry="5" fill={c} />;

const PricePlot = () => (
  <Plot $h={445} viewBox="2 111 1838 445">
    <path d={grayGrid(111, 552)} stroke="#494949" strokeDasharray="8 4" />
    <path d="M4.500 111V552M499.500 111V552M993.500 111V552M1488.500 111V552" stroke="#07494c" />
    <path d={arcs} fill="none" stroke="#8a0a0a" strokeDasharray="18 5" />
    <SeriesSet lines={channelLines} stroke="#0b7075" strokeWidth="1.2" />
    <SmoothSet lines={redAverage} stroke="#f00" strokeWidth="2" strokeDasharray="2.500 1.500" />
    <SmoothSet lines={greenAverage} stroke="#0f0" strokeWidth="2" strokeDasharray="2.500 1.500" />
    <polyline points={toPoints(priceLine)} fill="none" stroke="#6a5cf2" strokeWidth="1.2" />
    <Markers points={priceLine} />
    <Arrow x={421} y={271} color="#e80000" />
    <Arrow x={609} y={349} color="#e80000" />
    <Arrow x={1297} y={262} color="#d00000" />
    <Arrow x={33} y={420} up color="#ff0" />
    <Arrow x={546.5} y={432} up color="#ff0" />
    <Arrow x={1003} y={547} up color="#ff0" />
    <Arrow x={1492} y={371} up color="#ff0" />
  </Plot>
);

const MacdPlot = () => (
  <Plot $h={197} viewBox="2 576 1838 197">
    <path d={grayGrid(578, 770)} stroke="#464646" strokeDasharray="7 3" />
    <path d={range(9, 1809, 45).map((x) => `M${x + 0.5} 580V766`).join('')} stroke="#0a5c5e" strokeDasharray="19 5" />
    <path d="M3 603.500H1737" stroke="#f00" strokeWidth="2" />
    <path d="M3 643.500H1737M3 726.500H1737" stroke="#666600" strokeWidth="1.4" />
    <path d="M3 678.500H1737" stroke="#999" strokeDasharray="4 3" />
    <path d="M3 684.500H1737" stroke="#1518c8" strokeDasharray="4 3" />
    <path d="M3 767.500H1737" stroke="#e00" strokeWidth="1.4" />
    <polyline points={toPoints(macdLine)} fill="none" stroke="#14f0f5" strokeWidth="1.2" />
    <path d={smoothPath(macdYellow)} fill="none" stroke="#ff0" strokeWidth="1.1" />
    <path d={smoothPath(macdRed)} fill="none" stroke="#e80c0c" strokeWidth="1.1" />
  </Plot>
);

const CciPlot = () => (
  <Plot $h={196} viewBox="2 793 1838 196">
    <defs>
      <clipPath id="cciHigh"><rect x="0" y="780" width="1840" height="38" /></clipPath>
      <clipPath id="cciLow"><rect x="0" y="958" width="1840" height="40" /></clipPath>
    </defs>
    <path d={grayGrid(795, 988)} stroke="#444" strokeDasharray="7 3" />
    <path d={bars} stroke="#3e3e3e" />
    <path d="M3 818.500H1737M3 958.500H1737" stroke="#8c8c8c" strokeWidth="1.4" />
    <polyline points={toPoints(stocLine)} fill="none" stroke="#c46a10" strokeDasharray="3 2" />
    <path d={smoothPath(cciLine)} fill="none" stroke="#b5b5b5" />
    <path d={smoothPath(cciLine)} fill="none" stroke="#f00" strokeWidth="1.4" clipPath="url(#cciHigh)" />
    <path d={smoothPath(cciLine)} fill="none" stroke="#1ee8ee" strokeWidth="1.4" clipPath="url(#cciLow)" />
    <Dot x={270} y={801} c="#0ff" />
    <Dot x={447} y={801} c="#0ff" />
    <Dot x={1299} y={799} c="#0ff" />
    <Dot x={90} y={982} c="#f00" />
    <Dot x={612} y={983} c="#f00" />
    <Dot x={890} y={980} c="#f00" />
    <Dot x={1014} y={978} c="#f00" />
    <Dot x={1551} y={982} c="#f00" />
  </Plot>
);

const HandDrawings = () => (
  <Drawings viewBox="2 89 1918 929">
    <g fill="none" stroke="#f00" strokeWidth="2">
      <rect x="1132.500" y="350.500" width="70" height="488" />
      <rect x="1268.500" y="256.500" width="78" height="574" />
      <rect x="1264.500" y="264.500" width="651" height="45" />
      <rect x="1132.500" y="354.500" width="770" height="52" />
    </g>
    <g fill="none" stroke="#f00" strokeWidth="2.4">
      <polyline points={toPoints(fromCrop([[470,45],[510,35],[590,30],[592,80]], 1120, 190))} />
      <polyline points={toPoints(fromCrop([[475,95],[560,88],[595,83],[635,110],[635,135],[590,155],[520,160],[430,168]], 1120, 190))} />
      <polyline points={toPoints(fromCrop([[518,68],[518,180],[505,175]], 1120, 190))} />
      <polyline points={toPoints(fromCrop([[1028,770],[1040,720],[1055,680],[1062,605]], 1120, 190))} />
      <polyline points={toPoints(fromCrop([[1045,710],[1075,660],[1125,615],[1145,640],[1165,710],[1180,745],[1180,770]], 1120, 190))} />
      <polyline points={toPoints(fromCrop([[1003,716],[1110,710],[1220,707]], 1120, 190))} />
    </g>
  </Drawings>
);

const PaneAxis = ({ top, sep, ticks = [], labels = [], tags = [] }) => (
  <AxisColumn $sep={sep}>
    {ticks.map((y) => <AxisTick key={y} style={{ top: y - top }} />)}
    {labels.map(([text, y]) => <AxisLabel key={text} style={{ top: y - top - 11.5 }}>{text}</AxisLabel>)}
    {tags.map(([text, y, bg, h]) => <AxisTag key={text + y} $bg={bg} $h={h} style={{ top: y - top }}>{text}</AxisTag>)}
  </AxisColumn>
);

const TABS = ['STOX C164','STOX C55','STOX  C30','STOX  8 Giorni','FTSEMIB C164','FTSEMIB C55','FTSEMIB C30','FTSEMIB  8 Giorni','STOXX-FTSEMIB sito','PERCENTUALE','C164_3_Int','ZONE STOX','ZONE FTSEMIB'];

const App = () => (
  <Window>
    <GlobalStyle />
    <TitleBar>
      <AppLogo />
      <TitleText>TradeStation 8.1 - STOXX_FTSEMIB - STOX C55 - [Chart Analysis - GS:STOXX50-DT  240 min  [EUREX] STOXX FUTURES]</TitleText>
      <WindowButtons>
        <WindowButton $w={40} $first>
          <svg width="20" height="8"><rect y="1" width="18" height="6" rx="1" fill="#e6ecf2" /></svg>
        </WindowButton>
        <WindowButton $w={35}>
          <svg width="20" height="20" viewBox="0 0 20 20"><path d="M6 1h13v13h-3" fill="none" stroke="#c5d0da" strokeWidth="2" /><rect x="2" y="5" width="13" height="13" fill="none" stroke="#e6ecf2" strokeWidth="2.4" /><rect x="6" y="9" width="5" height="5" fill="none" stroke="#e6ecf2" /></svg>
        </WindowButton>
        <WindowButton $w={63}>
          <svg width="28" height="20" viewBox="0 0 28 20"><path d="M5 2l18 16M23 2L5 18" stroke="#e6ecf2" strokeWidth="4.6" /></svg>
        </WindowButton>
      </WindowButtons>
    </TitleBar>

    <MenuBar>
      <MenuChartIcon />
      <MenuItems>
        {['File','Edit','View','Insert','Format','Drawing','Window','Help'].map((m) => <MenuItem key={m}>{m}</MenuItem>)}
      </MenuItems>
      <MdiButtons>
        <MdiButton><svg width="10" height="10"><rect x="2" y="7" width="6" height="2" fill="#8a93a8" /></svg></MdiButton>
        <MdiButton><svg width="12" height="12"><path d="M4 3V1h7v6H9M1 4h7v7H1z" fill="none" stroke="#8a93a8" /></svg></MdiButton>
        <MdiButton><svg width="10" height="10"><path d="M1 1l8 8M9 1L1 9" stroke="#8a93a8" strokeWidth="2" /></svg></MdiButton>
      </MdiButtons>
    </MenuBar>

    <Toolbar>
      <Grip />
      <ToolGroup items={TOOLS_A} />
      <Combo>3<ComboDrop /></Combo>
      <ComboNext />
      <ToolSlot $left={10}><Svg20>{ICONS.lens}</Svg20></ToolSlot>
      <Grip $left={75} />
      <ToolGroup items={TOOLS_B} />
      <Grip $left={13} />
      <ToolGroup items={TOOLS_C} />
    </Toolbar>

    <ChartFrame>
      <PaneRow $h={467}>
        <PlotColumn>
          <Legend $h={22}>
            <LegendItem $c="#5060f0" $gap={0}>GS:STOXX50-DT - 240 min</LegendItem>
            <LegendItem $c="#5060f0" $gap={15}>EUREX</LegendItem>
            <LegendItem $gap={9}>02/23/2024</LegendItem>
            <LegendItem $c="#0f0">L=4881</LegendItem>
            <LegendItem>Hi=4894</LegendItem>
            <LegendItem>Lo=4861</LegendItem>
            <LegendItem $c="#0f0">C=4886</LegendItem>
            <LegendItem>Close</LegendItem>
            <LegendItem $c="#0ff" $gap={18}>4886</LegendItem>
            <LegendItem $gap={9}>HILOW Alert</LegendItem>
            <LegendItem $c="#0f0" $gap={18}>4644</LegendItem>
            <LegendItem $gap={9}>DONCHIAN CHANNEL</LegendItem>
            <LegendItem $c="#08737a" $gap={17}>4886</LegendItem>
            <LegendItem $c="#08737a" $gap={9}>4415</LegendItem>
          </Legend>
          <PricePlot />
        </PlotColumn>
        <PaneAxis
          top={89}
          sep
          ticks={[168,219,270,320,371,422,472,523]}
          labels={[['4800',168],['4700',219],['4600',270],['4500',320],['4300',422],['4200',472],['4100',523]]}
          tags={[['4886',115,'#6666ff'],['4644',238,'#00ff00'],['4415',355,'#008080']]}
        />
      </PaneRow>

      <PaneRow $h={217}>
        <PlotColumn>
          <Legend $h={20} $pad={1} $size={16.6}>
            <LegendItem $gap={0}>Leo Chart</LegendItem>
            <LegendItem $c="#0ff" $gap={18}>9.85</LegendItem>
            <LegendItem $c="#f00">8.00</LegendItem>
            <LegendItem $c="#f00" $gap={8}>-8.00</LegendItem>
            <LegendItem $c="#6b6b00" $gap={8}>4.00</LegendItem>
            <LegendItem $c="#6b6b00" $gap={9}>-4.00</LegendItem>
            <LegendItem $c="#0000ee" $gap={9}>0.00</LegendItem>
            <LegendItem $gap={9}>Macd Ciclico</LegendItem>
            <LegendItem $c="#6a6a6a" $gap={36}>0.00</LegendItem>
          </Legend>
          <MacdPlot />
        </PlotColumn>
        <PaneAxis
          top={556}
          ticks={[622,664,705,746,773]}
          labels={[['6.00',623],['2.00',664],['-2.00',705],['-6.00',746]]}
          tags={[['9.85',575,'#00ffff'],['8.00',598,'#ff0000',19],['4.00',634,'#666600'],['0.00',675,'#0000ff'],['-4.00',716,'#666600'],['-8.00',757,'#ff0000']]}
        />
      </PaneRow>

      <PaneRow $h={216}>
        <PlotColumn>
          <Legend $h={20} $size={16.5}>
            <LegendItem $gap={0}>CCI Smothing ekam</LegendItem>
            <LegendItem $c="#f00" $gap={17}>125.26</LegendItem>
            <LegendItem $c="#8a8a8a">120.00</LegendItem>
            <LegendItem $c="#8a8a8a" $gap={8.5}>-120.00</LegendItem>
            <LegendItem $c="#333" $gap={8.5}>125.26</LegendItem>
            <LegendItem $gap={8}>Stoc colore</LegendItem>
            <LegendItem $c="#c46a10" $gap={37}>1.00</LegendItem>
          </Legend>
          <CciPlot />
        </PlotColumn>
        <PaneAxis
          top={773}
          ticks={[800,829,858,887,916,945,974]}
          labels={[['100.00',829],['0.00',887],['-100.00',945]]}
          tags={[['',829,'#808080',3],['125.26',806,'#ff0000'],['-120.00',948,'#808080']]}
        />
      </PaneRow>

      <TimeAxis>
        <TimeCell $w={60.6} $long><TimeText>5/31</TimeText></TimeCell>
        {dates.map((d, i) => <TimeCell key={i} $w={69}><TimeText>{d}</TimeText></TimeCell>)}
      </TimeAxis>
      <HandDrawings />
    </ChartFrame>

    <ScrollRow>
      <ArrowLeft />
      <ScrollThumb><ThumbLine /><ThumbLine /><ThumbLine /></ScrollThumb>
      <ArrowRight />
    </ScrollRow>

    <TabRow>
      <TabNav>
        <TabNavButton>|◂</TabNavButton>
        <TabNavButton>◂</TabNavButton>
        <TabNavButton>▸</TabNavButton>
        <TabNavButton>▸|</TabNavButton>
      </TabNav>
      {TABS.map((t, i) => <Tab key={t} $active={i === 1} $last={i === TABS.length - 1}>{t}</Tab>)}
    </TabRow>

    <StatusBar>
      <StatusHelp>For Help, press F1</StatusHelp>
      <StatusCell $w={50} $plain>Acct:</StatusCell>
      <StatusCell $w={91}>Open Psns:</StatusCell>
      <StatusCell $w={64}>DT BP:</StatusCell>
      <StatusCell $w={87}>Purch Pwr:</StatusCell>
      <StatusCell $w={93}>Closed P/L:</StatusCell>
      <StatusCell $w={60}>RT TE:</StatusCell>
      <StatusCell $w={84}>Open P/L:</StatusCell>
      <StatusCell $w={87} $c="#1d8a1d">ORDER BAR</StatusCell>
      <StatusCell $w={69} $c="#0b8a5a">MACROS</StatusCell>
      <StatusCell $w={19} $plain><StatusLed /></StatusCell>
      <StatusCell $w={123}>25/02/2024 12:32</StatusCell>
    </StatusBar>
  </Window>
);

export default App;
